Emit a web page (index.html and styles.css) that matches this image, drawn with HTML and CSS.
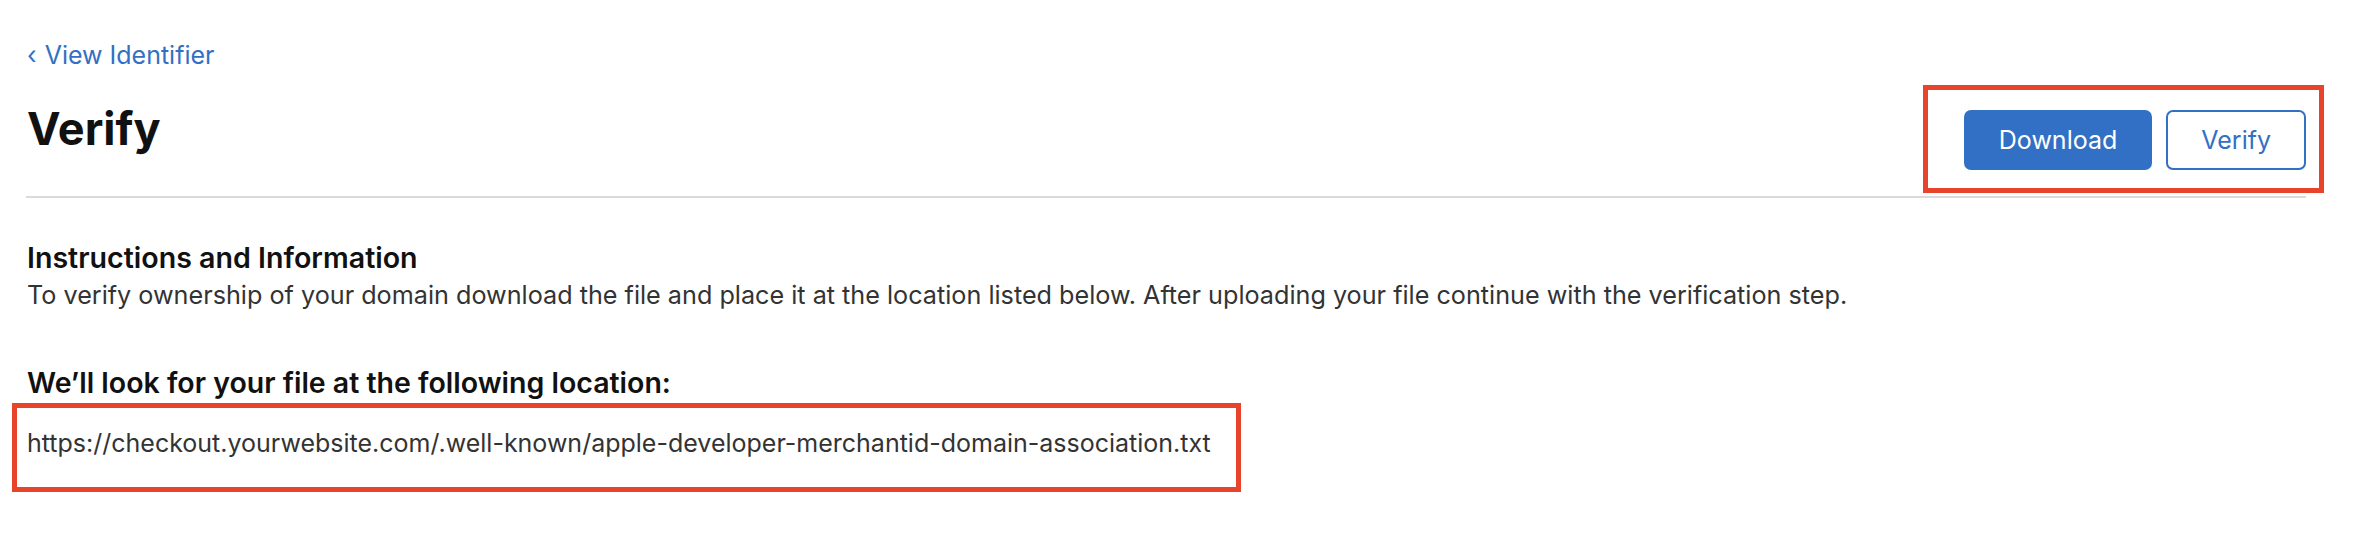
FILE: index.html
```html
<!DOCTYPE html>
<html lang="en">
<head>
<meta charset="utf-8">
<title>Verify</title>
<link rel="stylesheet" href="styles.css">
</head>
<body>
<main class="page">
  <a class="back-link" href="#"><span class="chev">‹</span> View Identifier</a>
  <header class="page-header">
    <h1 class="page-title">Verify</h1>
    <div class="actions">
      <button class="btn btn-primary" type="button">Download</button>
      <button class="btn btn-secondary" type="button">Verify</button>
      <span class="annotation annotation-actions"></span>
    </div>
  </header>
  <section class="info">
    <h2 class="section-title">Instructions and Information</h2>
    <p class="section-text">To verify ownership of your domain download the file and place it at the location listed below. After uploading your file continue with the verification step.</p>
    <h3 class="location-title">We’ll look for your file at the following location:</h3>
    <div class="location">
      <p class="location-url">https://checkout.yourwebsite.com/.well-known/apple-developer-merchantid-domain-association.txt</p>
      <span class="annotation annotation-url"></span>
    </div>
  </section>
</main>
</body>
</html>
```

FILE: styles.css
```css
html, body {
  margin: 0;
  padding: 0;
  background: #ffffff;
}

body {
  font-family: Inter, "Noto Sans", "Liberation Sans", sans-serif;
  color: #333333;
  min-height: 554px;
}

.page {
  padding: 40px 72px 80px 26px;
}

.back-link {
  display: block;
  font-size: 25px;
  line-height: 30px;
  color: #3370c4;
  text-decoration: none;
  padding-left: 1px;
}

.chev {
  display: inline-block;
  margin-right: 1px;
}

.page-header {
  display: flex;
  justify-content: space-between;
  align-items: flex-start;
  margin-top: 31px;
  padding-bottom: 26px;
  border-bottom: 2px solid #dadada;
}

.page-title {
  margin: 0;
  font-size: 45px;
  line-height: 56px;
  font-weight: 700;
  color: #111111;
  padding-left: 1px;
}

.actions {
  position: relative;
  display: flex;
  gap: 14px;
  margin-top: 9px;
}

.btn {
  height: 60px;
  padding: 0 33px;
  border: 2px solid #3170c5;
  border-radius: 7px;
  font-family: inherit;
  font-size: 25px;
  font-weight: 400;
  cursor: pointer;
}

.btn-primary {
  background: #3170c5;
  color: #ffffff;
}

.btn-secondary {
  background: #ffffff;
  color: #3170c5;
}

.annotation {
  position: absolute;
  display: block;
  box-sizing: border-box;
  border: 5px solid #e8432b;
  pointer-events: none;
}

.annotation-actions {
  left: -41px;
  right: -18px;
  top: -25px;
  bottom: -23px;
}

.info {
  padding-left: 1px;
}

.section-title {
  margin: 43px 0 0;
  font-size: 28.6px;
  line-height: 34px;
  font-weight: 600;
  color: #111111;
}

.section-text {
  margin: 3px 0 0;
  font-size: 25.2px;
  line-height: 34px;
  color: #333333;
}

.location-title {
  margin: 54px 0 0;
  font-size: 28.5px;
  line-height: 34px;
  font-weight: 600;
  color: #111111;
}

.location {
  position: relative;
  margin-top: 26px;
}

.location-url {
  margin: 0;
  font-size: 25px;
  line-height: 34px;
  color: #333333;
}

.annotation-url {
  left: -15px;
  width: 1229px;
  top: -23px;
  height: 89px;
}
```
